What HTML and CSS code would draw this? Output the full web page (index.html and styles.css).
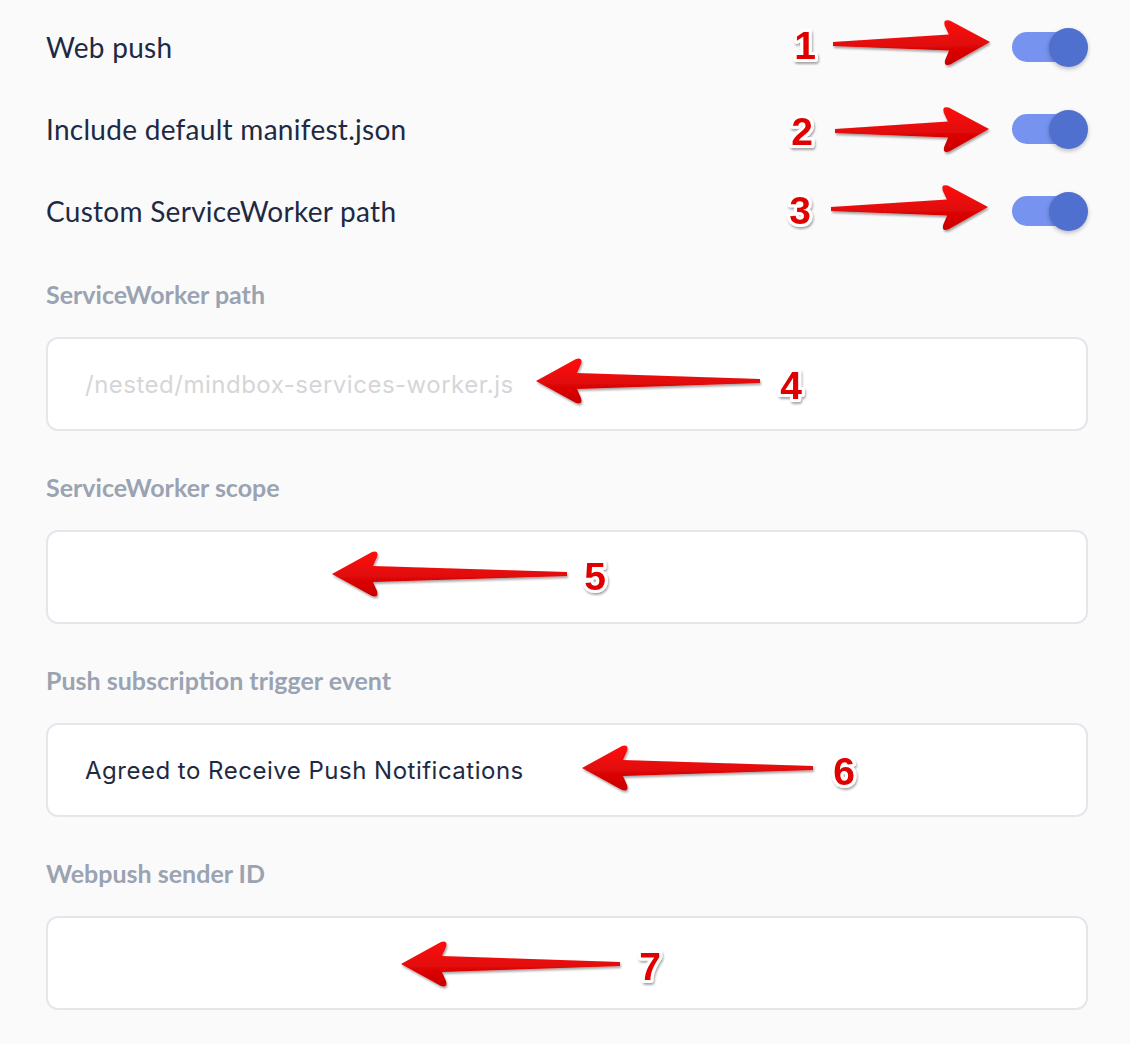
FILE: index.html
```html
<!DOCTYPE html>
<html>
<head>
<meta charset="utf-8">
<link rel="stylesheet" href="styles.css">
</head>
<body>
<div class="page">
  <div class="toggles">
    <div class="toggle-row"><span class="toggle-label">Web push</span><span class="switch"><span class="knob"></span></span></div>
    <div class="toggle-row"><span class="toggle-label">Include default manifest.json</span><span class="switch"><span class="knob"></span></span></div>
    <div class="toggle-row"><span class="toggle-label">Custom ServiceWorker path</span><span class="switch"><span class="knob"></span></span></div>
  </div>
  <div class="fields">
    <div class="field">
      <div class="field-label">ServiceWorker path</div>
      <div class="input"><span class="placeholder">/nested/mindbox-services-worker.js</span></div>
    </div>
    <div class="field">
      <div class="field-label">ServiceWorker scope</div>
      <div class="input"></div>
    </div>
    <div class="field">
      <div class="field-label">Push subscription trigger event</div>
      <div class="input"><span class="value">Agreed to Receive Push Notifications</span></div>
    </div>
    <div class="field">
      <div class="field-label">Webpush sender ID</div>
      <div class="input"></div>
    </div>
  </div>

  <svg class="annotations" width="1130" height="1044" viewBox="0 0 1130 1044" xmlns="http://www.w3.org/2000/svg">
    <defs>
      <linearGradient id="red" x1="0" y1="0" x2="0" y2="1">
        <stop offset="0" stop-color="#ff1010"/>
        <stop offset="1" stop-color="#c80000"/>
      </linearGradient>
      <filter id="sh" x="-10%" y="-30%" width="120%" height="160%">
        <feDropShadow dx="1" dy="2" stdDeviation="1" flood-color="#000" flood-opacity="0.35"/>
      </filter>
    </defs>
    <g filter="url(#sh)" fill="url(#red)">
      <path transform="translate(833,44) rotate(-0.7)" d="M0,-2 L116,-8 L112,-17 Q110,-24 117,-22 L157,0 L117,22 Q110,24 112,17 L116,8 L0,2 Z"/>
      <path transform="translate(835,131) rotate(-0.7)" d="M0,-2 L113,-8 L109,-17 Q107,-24 114,-22 L154,0 L114,22 Q107,24 109,17 L113,8 L0,2 Z"/>
      <path transform="translate(831,209) rotate(-0.7)" d="M0,-2 L116,-8 L112,-17 Q110,-24 117,-22 L157,0 L117,22 Q110,24 112,17 L116,8 L0,2 Z"/>
      <path transform="translate(760,381) scale(-1,1)" d="M0,-2 L183,-8 L179,-17 Q177,-24 184,-22 L224,0 L184,22 Q177,24 179,17 L183,8 L0,2 Z"/>
      <path transform="translate(567,574) scale(-1,1)" d="M0,-2 L194,-8 L190,-17 Q188,-24 195,-22 L235,0 L195,22 Q188,24 190,17 L194,8 L0,2 Z"/>
      <path transform="translate(813,768) scale(-1,1)" d="M0,-2 L190,-8 L186,-17 Q184,-24 191,-22 L231,0 L191,22 Q184,24 186,17 L190,8 L0,2 Z"/>
      <path transform="translate(620,964) scale(-1,1)" d="M0,-2 L178,-8 L174,-17 Q172,-24 179,-22 L219,0 L179,22 Q172,24 174,17 L178,8 L0,2 Z"/>
    </g>
    <g class="nums" filter="url(#sh)">
      <text x="805" y="59">1</text>
      <text x="802" y="145">2</text>
      <text x="800" y="224">3</text>
      <text x="791" y="399">4</text>
      <text x="595" y="590">5</text>
      <text x="844" y="785">6</text>
      <text x="650" y="980">7</text>
    </g>
  </svg>
</div>
</body>
</html>
```
FILE: styles.css
```css
* { box-sizing: border-box; }
html, body { margin: 0; padding: 0; }
body {
  background: #fafafa;
  width: 1130px;
  height: 1044px;
  overflow: hidden;
  font-family: Lato, "Open Sans", sans-serif;
}
.page {
  position: relative;
  width: 1130px;
  height: 1044px;
  padding: 6px 42px 0 46px;
}
.toggles {
  display: flex;
  flex-direction: column;
}
.toggle-row {
  height: 82px;
  display: flex;
  align-items: center;
  justify-content: space-between;
}
.toggle-label {
  font-size: 28px;
  color: #1e2a44;
  letter-spacing: 0.28px;
}
.switch {
  position: relative;
  width: 76px;
  height: 39px;
  display: flex;
  align-items: center;
}
.switch::before {
  content: "";
  display: block;
  width: 58px;
  height: 30px;
  border-radius: 15px;
  background: #7593ef;
}
.knob {
  position: absolute;
  right: 0;
  top: 0;
  width: 39px;
  height: 39px;
  border-radius: 50%;
  background: #5070cf;
  box-shadow: 0 2px 4px rgba(0, 0, 0, 0.25);
}
.fields {
  margin-top: 27px;
  display: flex;
  flex-direction: column;
  gap: 41px;
}
.field {
  display: flex;
  flex-direction: column;
  gap: 28px;
}
.field-label {
  height: 30px;
  line-height: 30px;
  font-size: 25px;
  font-weight: 700;
  color: #9aa3b1;
}
.input {
  height: 94px;
  border: 2px solid #e3e7ec;
  border-radius: 12px;
  background: #fff;
  padding-left: 37px;
  display: flex;
  align-items: center;
  font-family: Inter, Roboto, "Liberation Sans", sans-serif;
  font-size: 24px;
  letter-spacing: 0.5px;
}
.placeholder { color: #d5d6d9; }
.value { color: #1e2a44; }
.annotations {
  position: absolute;
  left: 0;
  top: 0;
  pointer-events: none;
}
.nums text {
  font-family: "Liberation Sans", Arial, sans-serif;
  font-weight: 700;
  font-size: 39px;
  letter-spacing: 0;
  fill: #e00000;
  stroke: #ffffff;
  stroke-width: 6px;
  stroke-linejoin: round;
  paint-order: stroke;
  text-anchor: middle;
}
```
